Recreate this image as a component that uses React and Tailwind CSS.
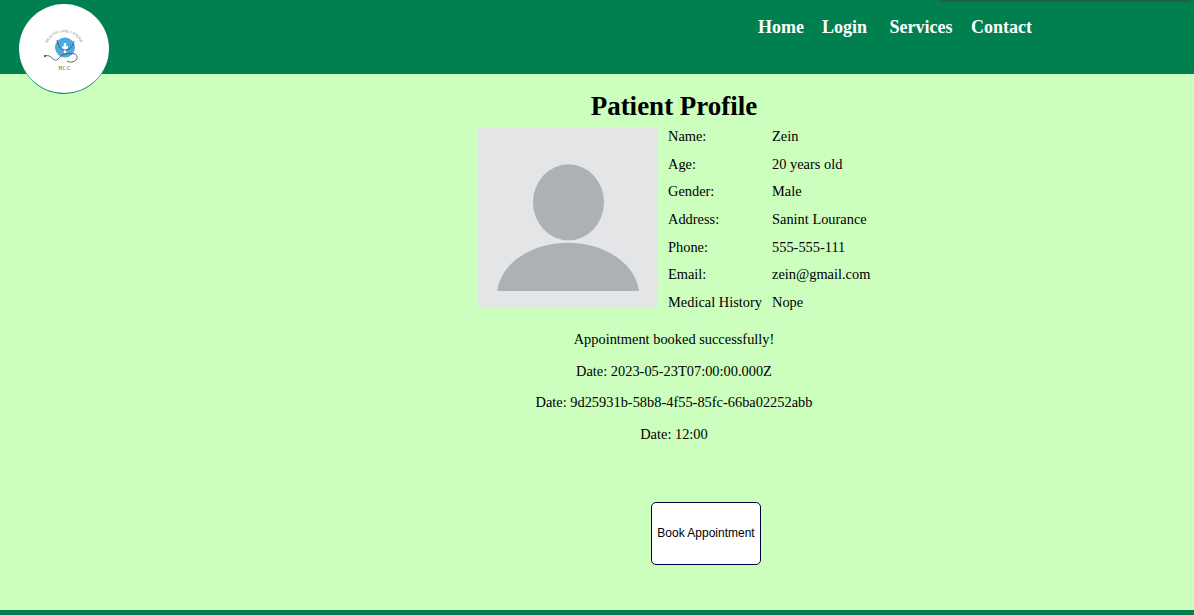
const rows = [
  ["Name:", "Zein"],
  ["Age:", "20 years old"],
  ["Gender:", "Male"],
  ["Address:", "Sanint Lourance"],
  ["Phone:", "555-555-111"],
  ["Email:", "zein@gmail.com"],
  ["Medical History", "Nope"],
];

function Logo() {
  return (
    <svg width="90" height="90" viewBox="0 0 90 90" className="block">
      <defs>
        <path id="logo-arc" d="M27 46 A18 18 0 0 1 63 46" fill="none" />
      </defs>
      <circle cx="46" cy="43.500" r="10" fill="#4ea9e3" />
      <path d="M43 43.500h6M46 39v10" stroke="#ffffff" strokeWidth="2.4" fill="none" />
      <path d="M38 36c1 6 4 10 8 10s8-3 9-9" stroke="#444444" strokeWidth="0.8" fill="none" />
      <path d="M26 52c3-1 5 0 7 2s4 3 6 1 4-5 7-5 8-1 10 0 3 4 1 6-6 3-9 1" stroke="#555555" strokeWidth="0.9" fill="none" />
      <circle cx="26" cy="52" r="1.100" fill="#444444" />
      <text fontFamily="'Liberation Serif', serif" fontSize="3.500" fill="#666666" letterSpacing="0.2">
        <textPath href="#logo-arc" startOffset="50%" textAnchor="middle">HEALTH CARE CENTER</textPath>
      </text>
      <text x="45.500" y="65.500" textAnchor="middle" fontFamily="'Liberation Serif', serif" fontSize="5.500" fill="#666666" letterSpacing="0.4">HCC</text>
    </svg>
  );
}

function Avatar() {
  return (
    <svg width="180" height="180" viewBox="0 0 180 180" className="mb-[1.600px] block shrink-0">
      <rect width="180" height="180" fill="#e3e5e7" />
      <ellipse cx="90.500" cy="74.300" rx="35.500" ry="38" fill="#adb1b5" />
      <path d="M19.300 163 C23 134 55 114.700 90 114.700 C125 114.700 157 134 161 163 Z" fill="#adb1b5" />
    </svg>
  );
}

export default function App() {
  return (
    <div className="relative flex h-[615px] flex-col overflow-hidden bg-[#ccffbe] font-['Liberation_Serif',serif] text-black">
      <div className="absolute right-1 top-0 h-px w-[250px] bg-[#1c5f45] shadow-[0_0_3px_#1c5f45]" />
      <header className="flex h-[74px] shrink-0 items-start bg-[#007f4f] pl-[19px] pt-1">
        <div className="z-10 h-[90px] w-[90px] shrink-0 overflow-hidden rounded-full border-b border-[#007f4f] bg-white">
          <Logo />
        </div>
        <nav className="ml-[649px] flex pt-[13px] text-[18px] font-bold leading-[21px] text-white">
          <a className="mr-[18px]">Home</a>
          <a className="mr-[22.500px]">Login</a>
          <a className="mr-[18.500px]">Services</a>
          <a>Contact</a>
        </nav>
      </header>
      <main className="flex flex-1 flex-col items-center">
        <h1 className="ml-[154px] mt-[17px] text-[27px] font-bold leading-[31.300px]">Patient Profile</h1>
        <div className="ml-[159px] flex items-center gap-[10px]">
          <Avatar />
          <div className="grid w-[207px] grid-cols-[94px_1fr] gap-x-[10px] text-[14.400px] leading-[16px]">
            {rows.map(([k, v]) => (
              <div key={k} className="col-span-2 grid h-[27.670px] grid-cols-subgrid items-center">
                <span className="whitespace-nowrap">{k}</span>
                <span className="whitespace-nowrap">{v}</span>
              </div>
            ))}
          </div>
        </div>
        <div className="ml-[154px] mt-[15px] flex flex-col items-center gap-[15.670px] text-[14.400px] leading-[16px]">
          <p>Appointment booked successfully!</p>
          <p>Date: 2023-05-23T07:00:00.000Z</p>
          <p>Date: 9d25931b-58b8-4f55-85fc-66ba02252abb</p>
          <p>Date: 12:00</p>
        </div>
        <button className="ml-[218px] mt-[60px] h-[63px] w-[110px] rounded-[5px] border border-[#000040] bg-white font-['Liberation_Sans',sans-serif] text-[12px] text-black">
          Book Appointment
        </button>
      </main>
      <footer className="h-[5px] shrink-0 bg-[#007f4f]" />
    </div>
  );
}
